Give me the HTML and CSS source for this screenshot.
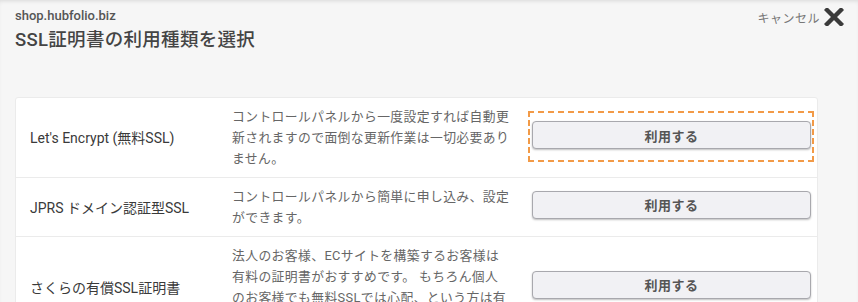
FILE: index.html
```html
<!DOCTYPE html>
<html lang="ja">
  <head>
    <meta charset="UTF-8" />
    <meta name="viewport" content="width=device-width, initial-scale=1.0" />
    <title>SSL証明書の利用種類を選択</title>
    <link rel="stylesheet" href="styles.css">
  </head>
  <body>

    <div class="header">
      <div>
        <div class="site">shop.hubfolio.biz</div>
        <h1>SSL証明書の利用種類を選択</h1>
      </div>
      <a class="cancel" href="#">
        キャンセル
        <svg width="20" height="18" viewBox="0 0 20 18">
          <path d="M3 2 L17 16 M17 2 L3 16" stroke="#3b3b3b" stroke-width="4.4" stroke-linecap="square" fill="none"/>
        </svg>
      </a>
    </div>

    <div class="card">
      <div class="row">
        <div class="name">Let's Encrypt (無料SSL)</div>
        <div class="desc">コントロールパネルから一度設定すれば自動更<br>新されますので面倒な更新作業は一切必要あり<br>ません。</div>
        <div class="action">
          <div class="focus"><button class="btn">利用する</button></div>
        </div>
      </div>
      <div class="row">
        <div class="name">JPRS ドメイン認証型SSL</div>
        <div class="desc">コントロールパネルから簡単に申し込み、設定<br>ができます。</div>
        <div class="action"><button class="btn">利用する</button></div>
      </div>
      <div class="row">
        <div class="name">さくらの有償SSL証明書</div>
        <div class="desc">法人のお客様、ECサイトを構築するお客様は<br>有料の証明書がおすすめです。 もちろん個人<br>のお客様でも無料SSLでは心配、という方は有<br>料の証明書をご利用ください。</div>
        <div class="action"><button class="btn">利用する</button></div>
      </div>
    </div>

  </body>
</html>
```

FILE: styles.css
```css
* {
  box-sizing: border-box;
  margin: 0;
  padding: 0;
}
body {
  font-family: Roboto, "Noto Sans CJK JP", sans-serif;
  background: #f6f6f6;
  color: #444;
  height: 302px;
  overflow: hidden;
  box-shadow: inset 0 3px 4px -2px rgba(0, 0, 0, 0.12);
}
.header {
  display: flex;
  justify-content: space-between;
  align-items: flex-start;
  padding: 7px 15px 0 15px;
}
.site {
  font-size: 13px;
  font-weight: 500;
  color: #555;
  line-height: 18px;
}
.header h1 {
  font-size: 18.5px;
  font-weight: 500;
  color: #444;
  letter-spacing: 0.3px;
  line-height: 26px;
  margin-top: 2px;
}
.cancel {
  display: flex;
  align-items: center;
  gap: 4px;
  font-size: 12px;
  color: #777;
  letter-spacing: 0.5px;
  text-decoration: none;
  margin-top: 1px;
  margin-right: -1px;
}
.card {
  width: 803px;
  margin: 44px 0 0 15px;
  background: white;
  border: 1px solid #ebebeb;
  border-radius: 3px;
}
.row {
  display: flex;
  align-items: center;
  border-bottom: 1px solid #ebebeb;
}
.name {
  width: 201px;
  padding-left: 14px;
  padding-bottom: 1px;
  font-size: 14px;
  color: #3a3a3a;
}
.desc {
  width: 300px;
  padding: 8px 0 8px 15px;
  font-size: 12.8px;
  line-height: 21px;
  letter-spacing: 0.4px;
  color: #666;
}
.action {
  flex: 1;
  padding: 0 6px 5px 15px;
}
.focus {
  position: relative;
}
.focus::after {
  content: "";
  position: absolute;
  top: -10px;
  bottom: -13px;
  left: -4px;
  right: -3px;
  border: 2px dashed #f29a47;
}
.btn {
  display: block;
  width: 100%;
  height: 28px;
  background: #f1f1f4;
  border: 1px solid #a8a8ad;
  border-radius: 4px;
  box-shadow: 0 1px 2px rgba(0, 0, 0, 0.25);
  font-family: inherit;
  font-size: 13px;
  font-weight: 700;
  color: #555;
  letter-spacing: 0.5px;
  cursor: pointer;
}
```
